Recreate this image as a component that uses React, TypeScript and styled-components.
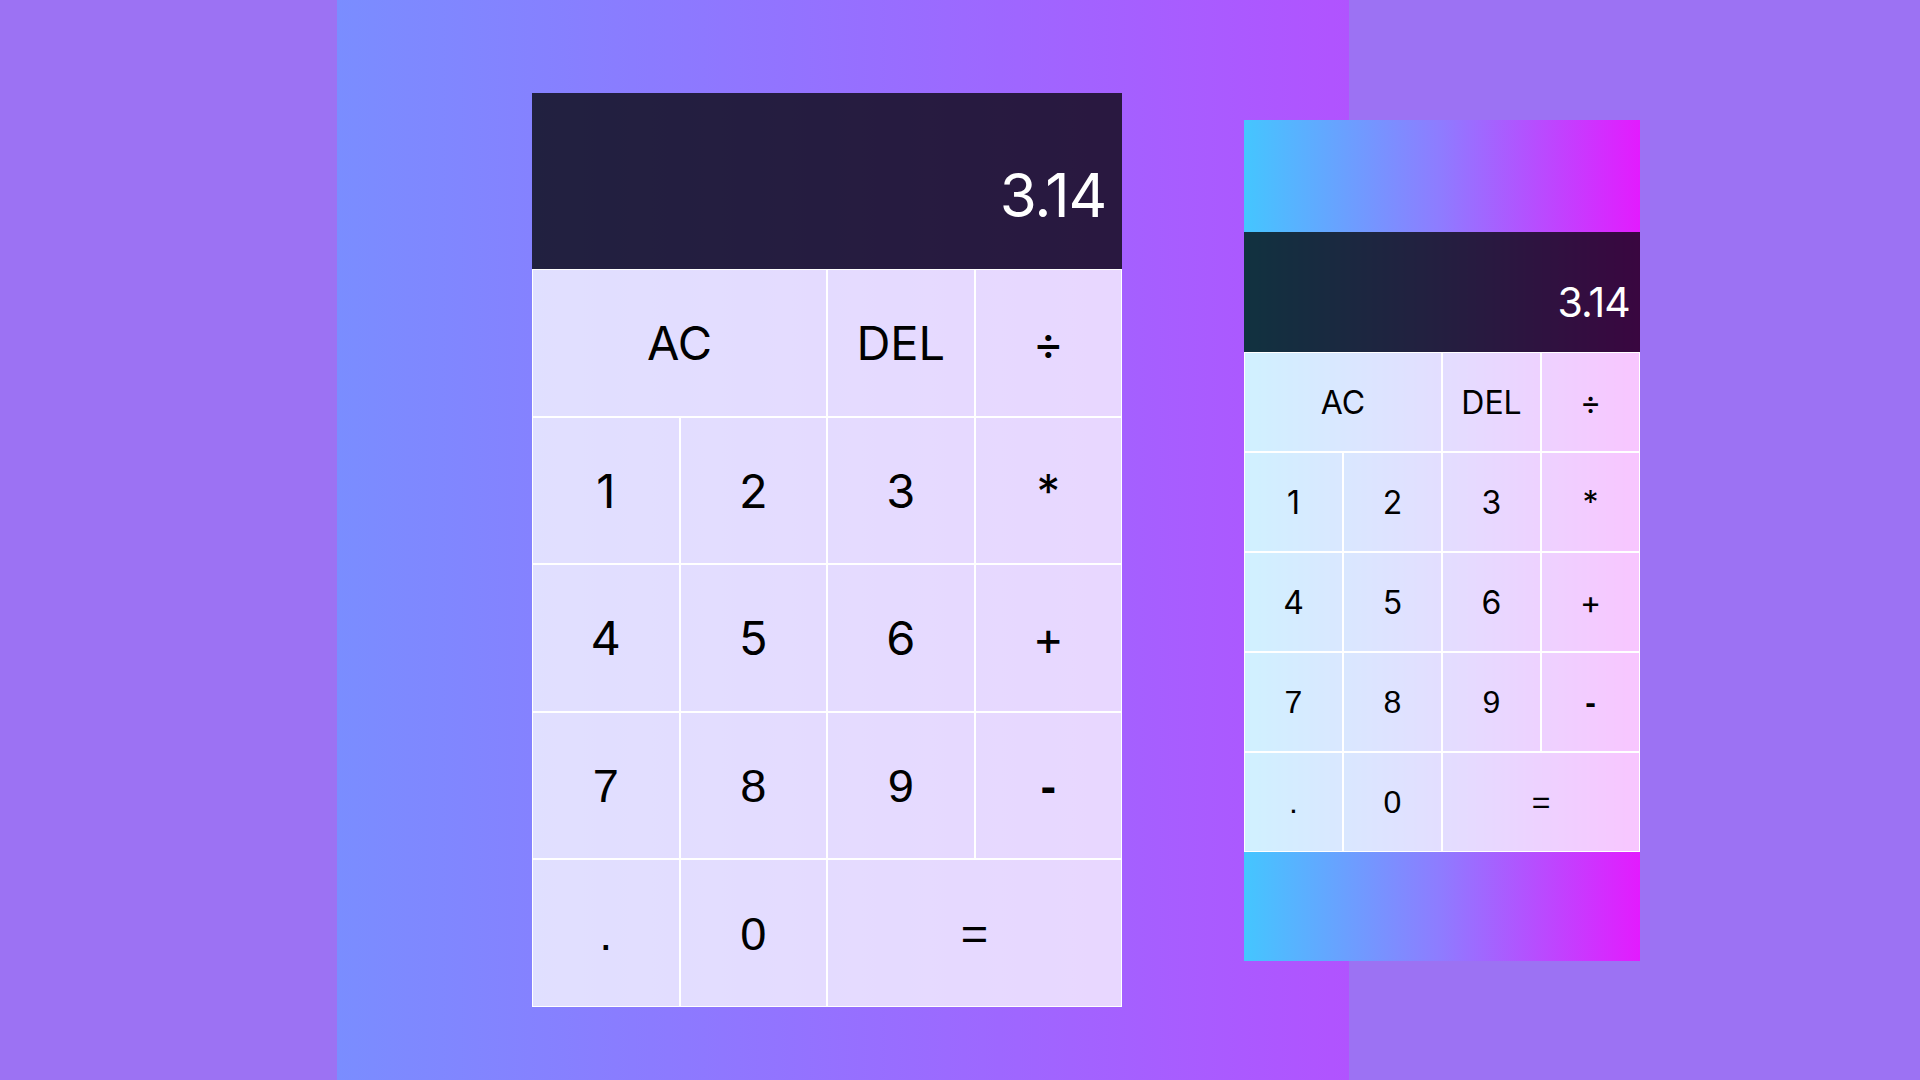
import React from "react";
import styled, { createGlobalStyle } from "styled-components";

const GlobalStyle = createGlobalStyle`
  html, body {
    margin: 0;
    padding: 0;
  }
  body {
    width: 1920px;
    height: 1080px;
    overflow: hidden;
    background: #9c72f3;
    font-family: Inter, "Noto Sans", sans-serif;
  }
`;

const Page = styled.main`
  display: flex;
  align-items: flex-start;
  width: 1920px;
  height: 1080px;
  box-sizing: border-box;
  padding-left: 337px;
`;

const Backdrop = styled.section`
  flex: none;
  width: 1012px;
  height: 1080px;
  box-sizing: border-box;
  padding: 93px 0 0 195px;
  background: linear-gradient(to right, #7a8dff, #b153ff);
`;

const Stage = styled.section`
  flex: none;
  margin: 120px 0 0 -105px;
  padding: 112px 0 109px;
  background: linear-gradient(to right, #44c6ff, #8f7bff 50%, #e31bfe);
`;

const Grid = styled.div<{ $col: number; $row: number; $display: number }>`
  display: grid;
  grid-template-columns: repeat(4, ${(p) => p.$col}px);
  grid-template-rows: ${(p) => p.$display}px repeat(5, ${(p) => p.$row}px);
`;

const Output = styled.div<{ $size: number; $right: number; $bottom: number }>`
  grid-column: 1 / -1;
  display: flex;
  align-items: flex-end;
  justify-content: flex-end;
  box-sizing: border-box;
  padding: 0 ${(p) => p.$right}px ${(p) => p.$bottom}px 0;
  background: rgba(0, 0, 0, 0.75);
  color: #ffffff;
  font-family: Inter, "Noto Sans", sans-serif;
  font-size: ${(p) => p.$size}px;
  letter-spacing: -0.02em;
`;

const Key = styled.button<{ $span: number; $size: number; $classic: boolean; $heavy: boolean }>`
  grid-column: span ${(p) => p.$span};
  margin: 0;
  padding: 0;
  border: 1px solid #ffffff;
  background: rgba(255, 255, 255, 0.75);
  color: #000000;
  font-family: ${(p) =>
    p.$classic ? '"Liberation Sans", Arial, sans-serif' : 'Inter, "Noto Sans", sans-serif'};
  font-size: ${(p) => p.$size}px;
  font-weight: ${(p) => (p.$heavy ? 700 : 400)};
  cursor: pointer;
  outline: none;
`;

type KeyDef = { label: string; span?: number; classic?: boolean; heavy?: boolean };

const KEYS: KeyDef[] = [
  { label: "AC", span: 2 },
  { label: "DEL" },
  { label: "÷" },
  { label: "1" },
  { label: "2" },
  { label: "3" },
  { label: "*" },
  { label: "4" },
  { label: "5" },
  { label: "6" },
  { label: "+" },
  { label: "7", classic: true },
  { label: "8", classic: true },
  { label: "9", classic: true },
  { label: "-", classic: true, heavy: true },
  { label: ".", classic: true },
  { label: "0", classic: true },
  { label: "=", span: 2, classic: true },
];

type CalcProps = {
  col: number;
  row: number;
  display: number;
  keySize: number;
  outSize: number;
  outRight: number;
  outBottom: number;
};

function Calculator({ col, row, display, keySize, outSize, outRight, outBottom }: CalcProps) {
  return (
    <Grid $col={col} $row={row} $display={display}>
      <Output $size={outSize} $right={outRight} $bottom={outBottom}>
        3.14
      </Output>
      {KEYS.map((k) => (
        <Key
          key={k.label}
          $span={k.span ?? 1}
          $size={keySize}
          $classic={!!k.classic}
          $heavy={!!k.heavy}
        >
          {k.label}
        </Key>
      ))}
    </Grid>
  );
}

export default function App() {
  return (
    <>
      <GlobalStyle />
      <Page>
        <Backdrop>
          <Calculator
            col={147.5}
            row={147.6}
            display={176}
            keySize={47}
            outSize={60}
            outRight={16}
            outBottom={38}
          />
        </Backdrop>
        <Stage>
          <Calculator
            col={99}
            row={100}
            display={120}
            keySize={32}
            outSize={41}
            outRight={10}
            outBottom={25}
          />
        </Stage>
      </Page>
    </>
  );
}
